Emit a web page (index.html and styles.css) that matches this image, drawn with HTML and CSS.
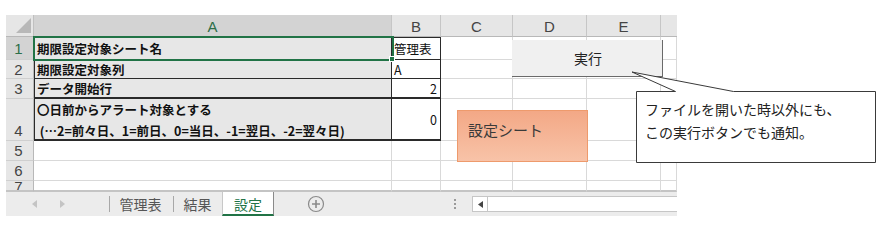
FILE: index.html
```html
<!DOCTYPE html>
<html lang="ja">
<head>
<meta charset="utf-8">
<link rel="stylesheet" href="styles.css">
</head>
<body>
<div class="page">
  <div class="sheet">
    <div class="grid">
      <div class="corner"><span class="tri"></span></div>
      <div class="hd sel">A</div>
      <div class="hd">B</div>
      <div class="hd">C</div>
      <div class="hd">D</div>
      <div class="hd">E</div>
      <div class="hd last"></div>

      <div class="rh sel">1</div>
      <div class="lab top">期限設定対象シート名</div>
      <div class="val top">管理表</div>
      <div class="c"></div><div class="c"></div><div class="c"></div><div class="c"></div>

      <div class="rh">2</div>
      <div class="lab">期限設定対象列</div>
      <div class="val">A</div>
      <div class="c"></div><div class="c"></div><div class="c"></div><div class="c"></div>

      <div class="rh">3</div>
      <div class="lab thick">データ開始行</div>
      <div class="val num thick">2</div>
      <div class="c"></div><div class="c"></div><div class="c"></div><div class="c"></div>

      <div class="rh bottom">4</div>
      <div class="lab multi thick">〇日前からアラート対象とする<br>&nbsp;(…2=前々日、1=前日、0=当日、-1=翌日、-2=翌々日)</div>
      <div class="val num thick">0</div>
      <div class="c"></div><div class="c"></div><div class="c"></div><div class="c"></div>

      <div class="rh">5</div>
      <div class="c"></div><div class="c"></div><div class="c"></div><div class="c"></div><div class="c"></div><div class="c"></div>

      <div class="rh">6</div>
      <div class="c"></div><div class="c"></div><div class="c"></div><div class="c"></div><div class="c"></div><div class="c"></div>

      <div class="rh cut">7</div>
      <div class="c"></div><div class="c"></div><div class="c"></div><div class="c"></div><div class="c"></div><div class="c"></div>
    </div>
    <div class="tabbar">
      <div class="nav">
        <svg width="6" height="8" viewBox="0 0 6 8"><path d="M5 0 L0 4 L5 8 Z" fill="#c4c4c4"/></svg>
        <svg width="6" height="8" viewBox="0 0 6 8"><path d="M1 0 L6 4 L1 8 Z" fill="#c4c4c4"/></svg>
      </div>
      <div class="tab t1">管理表</div>
      <div class="tab t2">結果</div>
      <div class="tab active">設定</div>
      <div class="addwrap">
        <svg width="18" height="18" viewBox="0 0 18 18"><circle cx="9" cy="9" r="7.5" fill="none" stroke="#8a8a8a" stroke-width="1.2"/><path d="M9 5 V13 M5 9 H13" stroke="#8a8a8a" stroke-width="1.6"/></svg>
      </div>
      <div class="dots"><i></i><i></i><i></i></div>
      <div class="scroll">
        <div class="sbtn"><svg width="5" height="7" viewBox="0 0 5 7"><path d="M5 0 L0 3.5 L5 7 Z" fill="#444"/></svg></div>
      </div>
    </div>
  </div>

  <div class="selbox"></div>
  <div class="handle"></div>
  <div class="btn">実行</div>
  <div class="shape">設定シート</div>
  <svg class="callout" width="250" height="96" viewBox="0 0 250 96">
    <path d="M6.5 21.5 H45.5 L2 2 L103.5 21.5 H245.5 V92.5 H6.5 Z" fill="#ffffff" stroke="#3a3a3a" stroke-width="1"/>
  </svg>
  <div class="calltext">ファイルを開いた時以外にも、<br>この実行ボタンでも通知。</div>
</div>
</body>
</html>
```
FILE: styles.css
```css
* { box-sizing: border-box; }
html, body { margin: 0; padding: 0; background: #ffffff; }
.page {
  position: relative;
  width: 886px;
  height: 233px;
  overflow: hidden;
  font-family: "Noto Sans CJK JP", sans-serif;
}
.sheet {
  margin: 15px 0 0 6px;
  width: 671px;
}
.grid {
  display: grid;
  grid-template-columns: 28px 358px 49px 72px 74px 74px 16px;
  grid-template-rows: 22px 23px 19px 20px 42px 20px 20px 11px;
}
.corner {
  background: #e6e6e6;
  border-right: 1px solid #c0c0c0;
  border-bottom: 1px solid #b8b8b8;
  position: relative;
}
.tri {
  position: absolute;
  right: 2px;
  bottom: 3px;
  width: 0;
  height: 0;
  border-left: 15px solid transparent;
  border-bottom: 15px solid #b8b8b8;
}
.hd {
  background: #e6e6e6;
  border-right: 1px solid #c6c6c6;
  border-bottom: 1px solid #b8b8b8;
  font-family: "Liberation Sans", sans-serif;
  font-size: 15px;
  color: #444;
  display: flex;
  align-items: center;
  justify-content: center;
  padding-top: 1px;
}
.hd.sel {
  background: #d3d3d3;
  color: #2c6e48;
  border-bottom: 1px solid #8c8c8c;
}
.hd.last { border-right: none; }
.rh {
  background: #e6e6e6;
  border-right: 1px solid #b8b8b8;
  border-bottom: 1px solid #cfcfcf;
  font-family: "Liberation Sans", sans-serif;
  font-size: 15px;
  color: #444;
  display: flex;
  align-items: center;
  justify-content: center;
  padding-right: 2px;
}
.rh.sel { background: #d3d3d3; color: #2c6e48; }
.rh.bottom { align-items: flex-end; padding-bottom: 1px; }
.rh.cut { align-items: flex-start; line-height: 12px; overflow: hidden; border-bottom: 2px solid #c4c4c4; }
.c {
  border-right: 1px solid #d9d9d9;
  border-bottom: 1px solid #d9d9d9;
}
.grid > .c:nth-last-child(-n+6) { border-bottom: 2px solid #c4c4c4; }
.lab {
  background: #e7e7e7;
  border-left: 1px solid #2a2a2a;
  border-right: 1px solid #2a2a2a;
  border-bottom: 1px solid #2a2a2a;
  font-weight: bold;
  font-size: 12.5px;
  color: #111;
  padding-left: 2px;
  display: flex;
  align-items: center;
  white-space: nowrap;
}
.val {
  background: #ffffff;
  border-right: 1px solid #2a2a2a;
  border-bottom: 1px solid #2a2a2a;
  font-size: 12.5px;
  color: #111;
  padding: 0 3px 0 2px;
  display: flex;
  align-items: center;
  white-space: nowrap;
}
.top { border-top: 1px solid #2a2a2a; }
.thick { border-bottom: 2px solid #2a2a2a; }
.num { justify-content: flex-end; }
.lab.multi {
  display: block;
  line-height: 21px;
  padding-top: 0;
}

.tabbar {
  height: 24px;
  background: #ececec;
  display: flex;
  align-items: center;
  font-size: 14px;
  color: #555;
}
.nav {
  width: 102px;
  height: 100%;
  display: flex;
  align-items: center;
  gap: 21px;
  padding-left: 26px;
}
.tab {
  height: 100%;
  display: flex;
  align-items: center;
  justify-content: center;
  border-left: 1px solid #a8a8a8;
  border-left-color: transparent;
  position: relative;
}
.t1 { width: 64px; }
.t2 { width: 50px; }
.t1::before, .t2::before {
  content: "";
  position: absolute;
  left: 0;
  top: 4px;
  bottom: 4px;
  width: 1px;
  background: #a8a8a8;
}
.active {
  width: 52px;
  background: #ffffff;
  color: #217346;
  border-left: 1px solid #c8c8c8;
  border-right: 1px solid #8a8a8a;
  border-bottom: 2px solid #217346;
  padding-top: 1px;
}
.addwrap {
  width: 66px;
  display: flex;
  align-items: center;
  padding-left: 33px;
}
.dots {
  width: 132px;
  display: flex;
  flex-direction: column;
  align-items: flex-end;
  gap: 2px;
  padding-right: 16px;
}
.dots i {
  display: block;
  width: 2px;
  height: 2px;
  background: #9a9a9a;
}
.scroll {
  flex: 1;
  height: 16px;
  background: #ffffff;
  border: 1px solid #c6c6c6;
  border-right: none;
  display: flex;
}
.sbtn {
  width: 15px;
  height: 100%;
  border-right: 1px solid #c6c6c6;
  display: flex;
  align-items: center;
  justify-content: center;
}

.selbox {
  position: absolute;
  left: 33px;
  top: 36px;
  width: 361px;
  height: 25px;
  border: 2px solid #217346;
}
.handle {
  position: absolute;
  left: 389px;
  top: 56px;
  width: 6px;
  height: 6px;
  background: #217346;
  border: 1px solid #ffffff;
}
.btn {
  position: absolute;
  left: 512px;
  top: 40px;
  width: 151px;
  height: 37px;
  background: #f0f0f0;
  border-right: 1px solid #6a6a6a;
  border-bottom: 1px solid #6a6a6a;
  display: flex;
  align-items: center;
  justify-content: center;
  font-size: 14px;
  color: #222;
  padding-left: 2px;
}
.shape {
  position: absolute;
  left: 457px;
  top: 110px;
  width: 131px;
  height: 52px;
  background: linear-gradient(to bottom, #f3a886, #f8c3a8);
  border: 1px solid #ee9a6c;
  font-size: 15px;
  color: #3a3a3a;
  padding: 8px 0 0 10px;
  line-height: 22px;
}
.callout {
  position: absolute;
  left: 630px;
  top: 70px;
}
.calltext {
  position: absolute;
  left: 645px;
  top: 98px;
  font-size: 14px;
  line-height: 23px;
  color: #222;
  white-space: nowrap;
}
```
